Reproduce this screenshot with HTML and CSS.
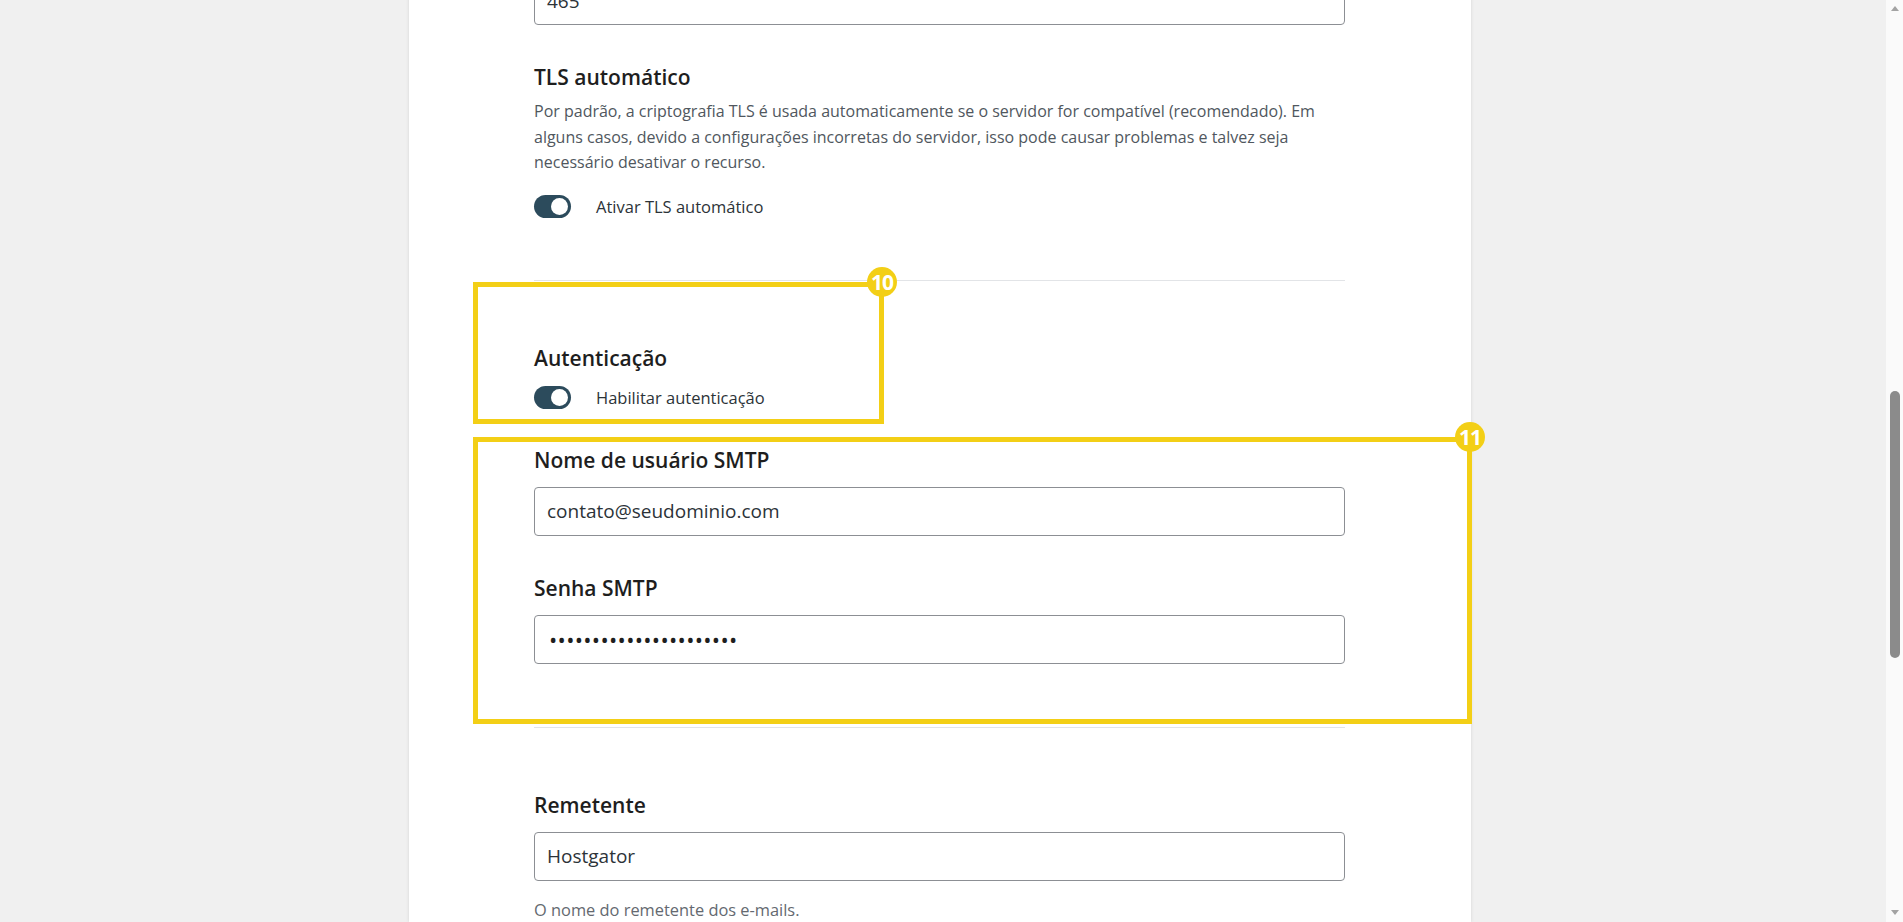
FILE: index.html
```html
<!DOCTYPE html>
<html lang="pt-BR">
<head>
<meta charset="utf-8">
<title>Configurações SMTP</title>
<link rel="stylesheet" href="styles.css">
</head>
<body>
<div class="viewport">
  <main class="panel">
    <div class="input top-input"><span class="input-text">465</span></div>

    <section class="group tls">
      <h3 class="title">TLS automático</h3>
      <p class="desc">Por padrão, a criptografia TLS é usada automaticamente se o servidor for compatível (recomendado). Em alguns casos, devido a configurações incorretas do servidor, isso pode causar problemas e talvez seja necessário desativar o recurso.</p>
      <div class="switch-row">
        <span class="switch"><span class="knob"></span></span>
        <span class="switch-label">Ativar TLS automático</span>
      </div>
    </section>

    <div class="divider first-divider"></div>

    <div class="mark mark-auth">
      <span class="badge">10</span>
      <h3 class="title">Autenticação</h3>
      <div class="switch-row auth-row">
        <span class="switch"><span class="knob"></span></span>
        <span class="switch-label">Habilitar autenticação</span>
      </div>
    </div>

    <div class="mark mark-cred">
      <span class="badge">11</span>
      <h3 class="title">Nome de usuário SMTP</h3>
      <div class="input field-input"><span class="input-text">contato@seudominio.com</span></div>
      <h3 class="title second-title">Senha SMTP</h3>
      <div class="input field-input"><span class="input-text dots">••••••••••••••••••••••</span></div>
    </div>

    <div class="divider second-divider"></div>

    <section class="group sender">
      <h3 class="title">Remetente</h3>
      <div class="input field-input"><span class="input-text">Hostgator</span></div>
      <p class="helper">O nome do remetente dos e-mails.</p>
    </section>
  </main>
</div>
<div class="scrollbar">
  <span class="arrow arrow-up"></span>
  <div class="track">
    <span class="thumb"></span>
  </div>
  <span class="arrow arrow-down"></span>
</div>
</body>
</html>
```
FILE: styles.css
```css
html, body {
  margin: 0;
  padding: 0;
  height: 922px;
  overflow: hidden;
}
body {
  display: flex;
  background: #f0f0f0;
  font-family: "Open Sans", "Noto Sans", sans-serif;
  color: #1e1e1e;
}
.viewport {
  flex: 1;
  height: 922px;
  overflow: hidden;
}
.panel {
  margin-left: 409px;
  width: 1062px;
  box-sizing: border-box;
  padding: 0 126px 0 125px;
  background: #fff;
  min-height: 922px;
  box-shadow: -1px 0 3px rgba(0,0,0,0.06), 1px 0 3px rgba(0,0,0,0.06);
}
.input {
  box-sizing: border-box;
  height: 49px;
  border: 1px solid #8c8f94;
  border-radius: 4px;
  background: #fff;
  display: flex;
  align-items: center;
  padding: 0 12px;
}
.input-text {
  font-size: 19px;
  color: #2c3338;
}
.dots {
  font-size: 22px;
  letter-spacing: 0.3px;
  color: #1e1e1e;
  margin-left: 2px;
}
.top-input {
  margin-top: -24px;
}
.title {
  margin: 0;
  font-size: 21px;
  font-weight: 600;
  line-height: 30px;
  color: #1e1e1e;
}
.tls {
  padding-top: 37px;
}
.desc {
  margin: 7px 0 0;
  font-size: 16px;
  line-height: 25.6px;
  color: #50575e;
}
.switch-row {
  display: flex;
  align-items: center;
  gap: 25px;
  height: 24px;
  margin-top: 19px;
}
.switch {
  position: relative;
  width: 37px;
  height: 23px;
  border-radius: 12px;
  background: #2c4b5c;
  flex: none;
}
.knob {
  position: absolute;
  right: 3px;
  top: 3px;
  width: 17px;
  height: 17px;
  border-radius: 50%;
  background: #fff;
}
.switch-label {
  font-size: 16.5px;
  color: #2c3338;
}
.divider {
  height: 1px;
  background: #e2e4e7;
}
.first-divider {
  margin-top: 61px;
}
.mark {
  position: relative;
  box-sizing: border-box;
  border: 5px solid #f3cf16;
  margin-left: -61px;
  padding-left: 56px;
}
.badge {
  position: absolute;
  top: -20px;
  right: -18px;
  width: 30px;
  height: 30px;
  border-radius: 50%;
  background: #f3cf16;
  color: #fff;
  font-family: "Open Sans", sans-serif;
  font-weight: 700;
  font-size: 21px;
  line-height: 30px;
  text-align: center;
  letter-spacing: -1px;
}
.mark-auth {
  width: 411px;
  margin-top: 1px;
  padding-top: 56px;
  padding-bottom: 9px;
}
.auth-row {
  margin-top: 13px;
}
.mark-cred {
  width: 999px;
  margin-top: 13px;
  padding-top: 3px;
  padding-bottom: 55px;
  padding-right: 122px;
}
.field-input {
  margin-top: 12px;
}
.second-title {
  margin-top: 37px;
}
.second-divider {
  margin-top: 3px;
}
.sender {
  padding-top: 62px;
}
.helper {
  margin: 16px 0 0;
  font-size: 16.4px;
  line-height: 25.6px;
  color: #646970;
}
.scrollbar {
  width: 17px;
  flex: none;
  height: 922px;
  background: #fafafa;
  display: flex;
  flex-direction: column;
  align-items: center;
}
.arrow {
  width: 0;
  height: 0;
  border-left: 4px solid transparent;
  border-right: 4px solid transparent;
  flex: none;
}
.arrow-up {
  margin-top: 6px;
  border-bottom: 5px solid #a3a3a3;
}
.arrow-down {
  margin-bottom: 7px;
  border-top: 5px solid #a3a3a3;
}
.track {
  flex: 1;
  width: 100%;
  display: flex;
  justify-content: center;
}
.thumb {
  margin-top: 380px;
  width: 10px;
  height: 267px;
  border-radius: 5px;
  background: #8b8b8b;
}
```
